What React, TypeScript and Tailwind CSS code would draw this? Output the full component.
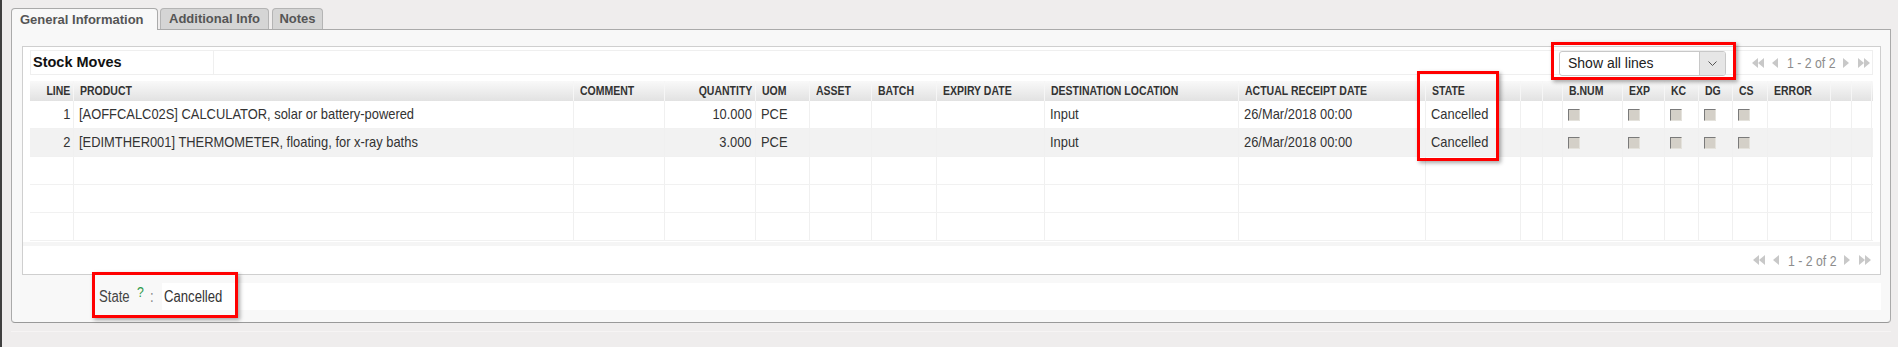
import React from "react";

type Col = { cls: string; label: string; right?: boolean };

const cols: Col[] = [
  { cls: "w-[44px]", label: "LINE", right: true },
  { cls: "w-[500px]", label: "PRODUCT" },
  { cls: "w-[91px]", label: "COMMENT" },
  { cls: "w-[91px]", label: "QUANTITY", right: true },
  { cls: "w-[54px]", label: "UOM" },
  { cls: "w-[62px]", label: "ASSET" },
  { cls: "w-[65px]", label: "BATCH" },
  { cls: "w-[108px]", label: "EXPIRY DATE" },
  { cls: "w-[194px]", label: "DESTINATION LOCATION" },
  { cls: "w-[187px]", label: "ACTUAL RECEIPT DATE" },
  { cls: "w-[95px]", label: "STATE" },
  { cls: "w-[22px]", label: "" },
  { cls: "w-[20px]", label: "" },
  { cls: "w-[60px]", label: "B.NUM" },
  { cls: "w-[42px]", label: "EXP" },
  { cls: "w-[34px]", label: "KC" },
  { cls: "w-[34px]", label: "DG" },
  { cls: "w-[35px]", label: "CS" },
  { cls: "w-[63px]", label: "ERROR" },
  { cls: "w-[21px]", label: "" },
  { cls: "w-[20px]", label: "" },
];

const CB = "__cb__";

const rows: string[][] = [
  ["1", "[AOFFCALC02S] CALCULATOR, solar or battery-powered", "", "10.000", "PCE", "", "", "", "Input", "26/Mar/2018 00:00", "Cancelled", "", "", CB, CB, CB, CB, CB, "", "", ""],
  ["2", "[EDIMTHER001] THERMOMETER, floating, for x-ray baths", "", "3.000", "PCE", "", "", "", "Input", "26/Mar/2018 00:00", "Cancelled", "", "", CB, CB, CB, CB, CB, "", "", ""],
  [],
  [],
  [],
];

function N({ children, right, sc = "scale-x-[0.82]" }: { children: React.ReactNode; right?: boolean; sc?: string }) {
  return (
    <span className={`inline-block whitespace-nowrap ${sc} ${right ? "origin-right" : "origin-left"}`}>
      {children}
    </span>
  );
}

function Checkbox() {
  return (
    <span className="block w-[12px] h-[12px] bg-[#d4d0c8] border-t border-l border-[#7a7a7a] border-r border-b border-r-[#e4e2dc] border-b-[#e4e2dc]" />
  );
}

function Pager() {
  return (
    <div className="flex items-center">
      <svg width="12" height="10" viewBox="0 0 12 10" className="mr-[8px]">
        <polygon points="6,0 6,10 0,5" fill="#c8c8c8" />
        <polygon points="12,0 12,10 6,5" fill="#c8c8c8" />
      </svg>
      <svg width="6" height="10" viewBox="0 0 6 10" className="mr-[9px]">
        <polygon points="6,0 6,10 0,5" fill="#c8c8c8" />
      </svg>
      <span className="w-[48px] text-[15px] text-[#8c8c8c] leading-none overflow-visible">
        <N>1 - 2 of 2</N>
      </span>
      <svg width="6" height="10" viewBox="0 0 6 10" className="ml-[8px]">
        <polygon points="0,0 0,10 6,5" fill="#c8c8c8" />
      </svg>
      <svg width="12" height="10" viewBox="0 0 12 10" className="ml-[9px]">
        <polygon points="0,0 0,10 6,5" fill="#c8c8c8" />
        <polygon points="6,0 6,10 12,5" fill="#c8c8c8" />
      </svg>
    </div>
  );
}

function RedBox({ cls }: { cls: string }) {
  return (
    <div className={`absolute border-[3px] border-[#ff0000] shadow-[2px_2px_4px_rgba(0,0,0,0.35)] pointer-events-none ${cls}`} />
  );
}

export default function App() {
  return (
    <div className="relative flex w-[1898px] h-[347px] bg-[#efeded] overflow-hidden font-['Liberation_Sans',Arial,sans-serif]">
      <div className="w-[2px] h-full bg-[#404040]" />
      <div className="flex flex-col">
        {/* Tabs */}
        <div className="flex items-end ml-[9px] mt-[8px] h-[21px] gap-[2px]">
          <div className="relative z-10 w-[147px] h-[22px] -mb-[1px] bg-[#f8f8f8] border border-b-0 border-[#aaaaaa] rounded-t-[4px] flex items-center pl-[8px] text-[13px] font-bold text-[#555555]">
            General Information
          </div>
          <div className="w-[109px] h-[21px] bg-[#d5d5d5] border border-b-0 border-[#b4b4b4] rounded-t-[4px] flex items-center justify-center text-[13px] font-bold text-[#555555]">
            Additional Info
          </div>
          <div className="w-[51px] h-[21px] ml-[1px] bg-[#d5d5d5] border border-b-0 border-[#b4b4b4] rounded-t-[4px] flex items-center justify-center text-[13px] font-bold text-[#555555]">
            Notes
          </div>
        </div>

        {/* Panel */}
        <div className="ml-[9px] w-[1880px] h-[294px] bg-[#f8f8f8] border border-[#aaaaaa] border-b-[#999999] rounded-b-[4px] pt-[16px] pl-[10px] pr-[9px] flex flex-col">
          {/* Grid box */}
          <div className="w-full h-[229px] bg-white border border-[#cfcfcf] flex flex-col">
            {/* Title bar */}
            <div className="mx-[7px] mt-[3px] h-[25px] border border-[#efefef] flex items-center">
              <div className="w-[183px] h-full border-r border-[#efefef] flex items-center pl-[2px] text-[14.5px] font-bold text-[#111111]">
                Stock Moves
              </div>
              <div className="flex-1" />
              <div className="self-start w-[167px] h-[25px] bg-white border border-[#c8c8c8] rounded-[3px] flex items-stretch">
                <div className="flex-1 flex items-center pl-[8px] text-[14px] text-[#222222]">Show all lines</div>
                <div className="w-[26px] bg-[#e6e6e6] border-l border-[#c8c8c8] rounded-r-[2px] flex items-center justify-center">
                  <svg width="9" height="6" viewBox="0 0 9 6">
                    <polyline points="0.5,0.5 4.5,4.5 8.5,0.5" fill="none" stroke="#555555" strokeWidth="1" />
                  </svg>
                </div>
              </div>
              <div className="ml-[26px] mr-[2px]">
                <Pager />
              </div>
            </div>

            {/* Table */}
            <div className="mx-[7px] mt-[6px]">
              <div className="flex h-[20px] bg-gradient-to-b from-[#f9f9f9] to-[#e2e2e2]">
                {cols.map((c, i) => (
                  <div
                    key={i}
                    className={`${c.cls} shrink-0 h-full flex items-center text-[12px] font-bold text-[#333333] border-r border-[#f6f6f6] ${c.right ? "justify-end pr-[3px]" : "pl-[6px]"}`}
                  >
                    {c.label && <N right={c.right} sc="scale-x-[0.875]">{c.label}</N>}
                  </div>
                ))}
              </div>
              {rows.map((r, ri) => (
                <div
                  key={ri}
                  className={`flex h-[28px] border-b border-[#f1f1f1] ${ri === 1 ? "bg-[#f2f2f2]" : "bg-white"}`}
                >
                  {cols.map((c, ci) => {
                    const v = r[ci] ?? "";
                    return (
                      <div
                        key={ci}
                        className={`${c.cls} shrink-0 h-full flex items-center text-[15px] text-[#333333] border-r border-[#f0f0f0] whitespace-nowrap overflow-hidden ${c.right ? "justify-end pr-[3px]" : "pl-[5px]"}`}
                      >
                        {v === CB ? <Checkbox /> : v ? <N right={c.right} sc="scale-x-[0.86]">{v}</N> : null}
                      </div>
                    );
                  })}
                </div>
              ))}
            </div>

            {/* Footer pager */}
            <div className="mt-[1px] flex-1 border-t-[4px] border-[#f5f5f5] flex items-center justify-end pr-[9px]">
              <Pager />
            </div>
          </div>

          {/* State row */}
          <div className="mt-[8px] h-[27px] flex items-center text-[16px]">
            <span className="ml-[77px] w-[30px] text-[#444444]"><N>State</N></span>
            <span className="ml-[8px] w-[7px] -mt-[9px] text-[15px] text-[#2f9a4a]"><N>?</N></span>
            <span className="ml-[6px] w-[4px] text-[#888888]"><N>:</N></span>
            <div className="ml-[8px] flex-1 h-full bg-white flex items-center pl-[2px] text-[#333333]">
              <N>Cancelled</N>
            </div>
          </div>
        </div>

        <div className="ml-[9px] mt-[8px] w-[1880px] h-px bg-[#f6f4f4]" />
      </div>

      <RedBox cls="left-[1551px] top-[42px] w-[185px] h-[38px]" />
      <RedBox cls="left-[1417px] top-[71px] w-[82px] h-[90px]" />
      <RedBox cls="left-[92px] top-[272px] w-[146px] h-[46px]" />
    </div>
  );
}
